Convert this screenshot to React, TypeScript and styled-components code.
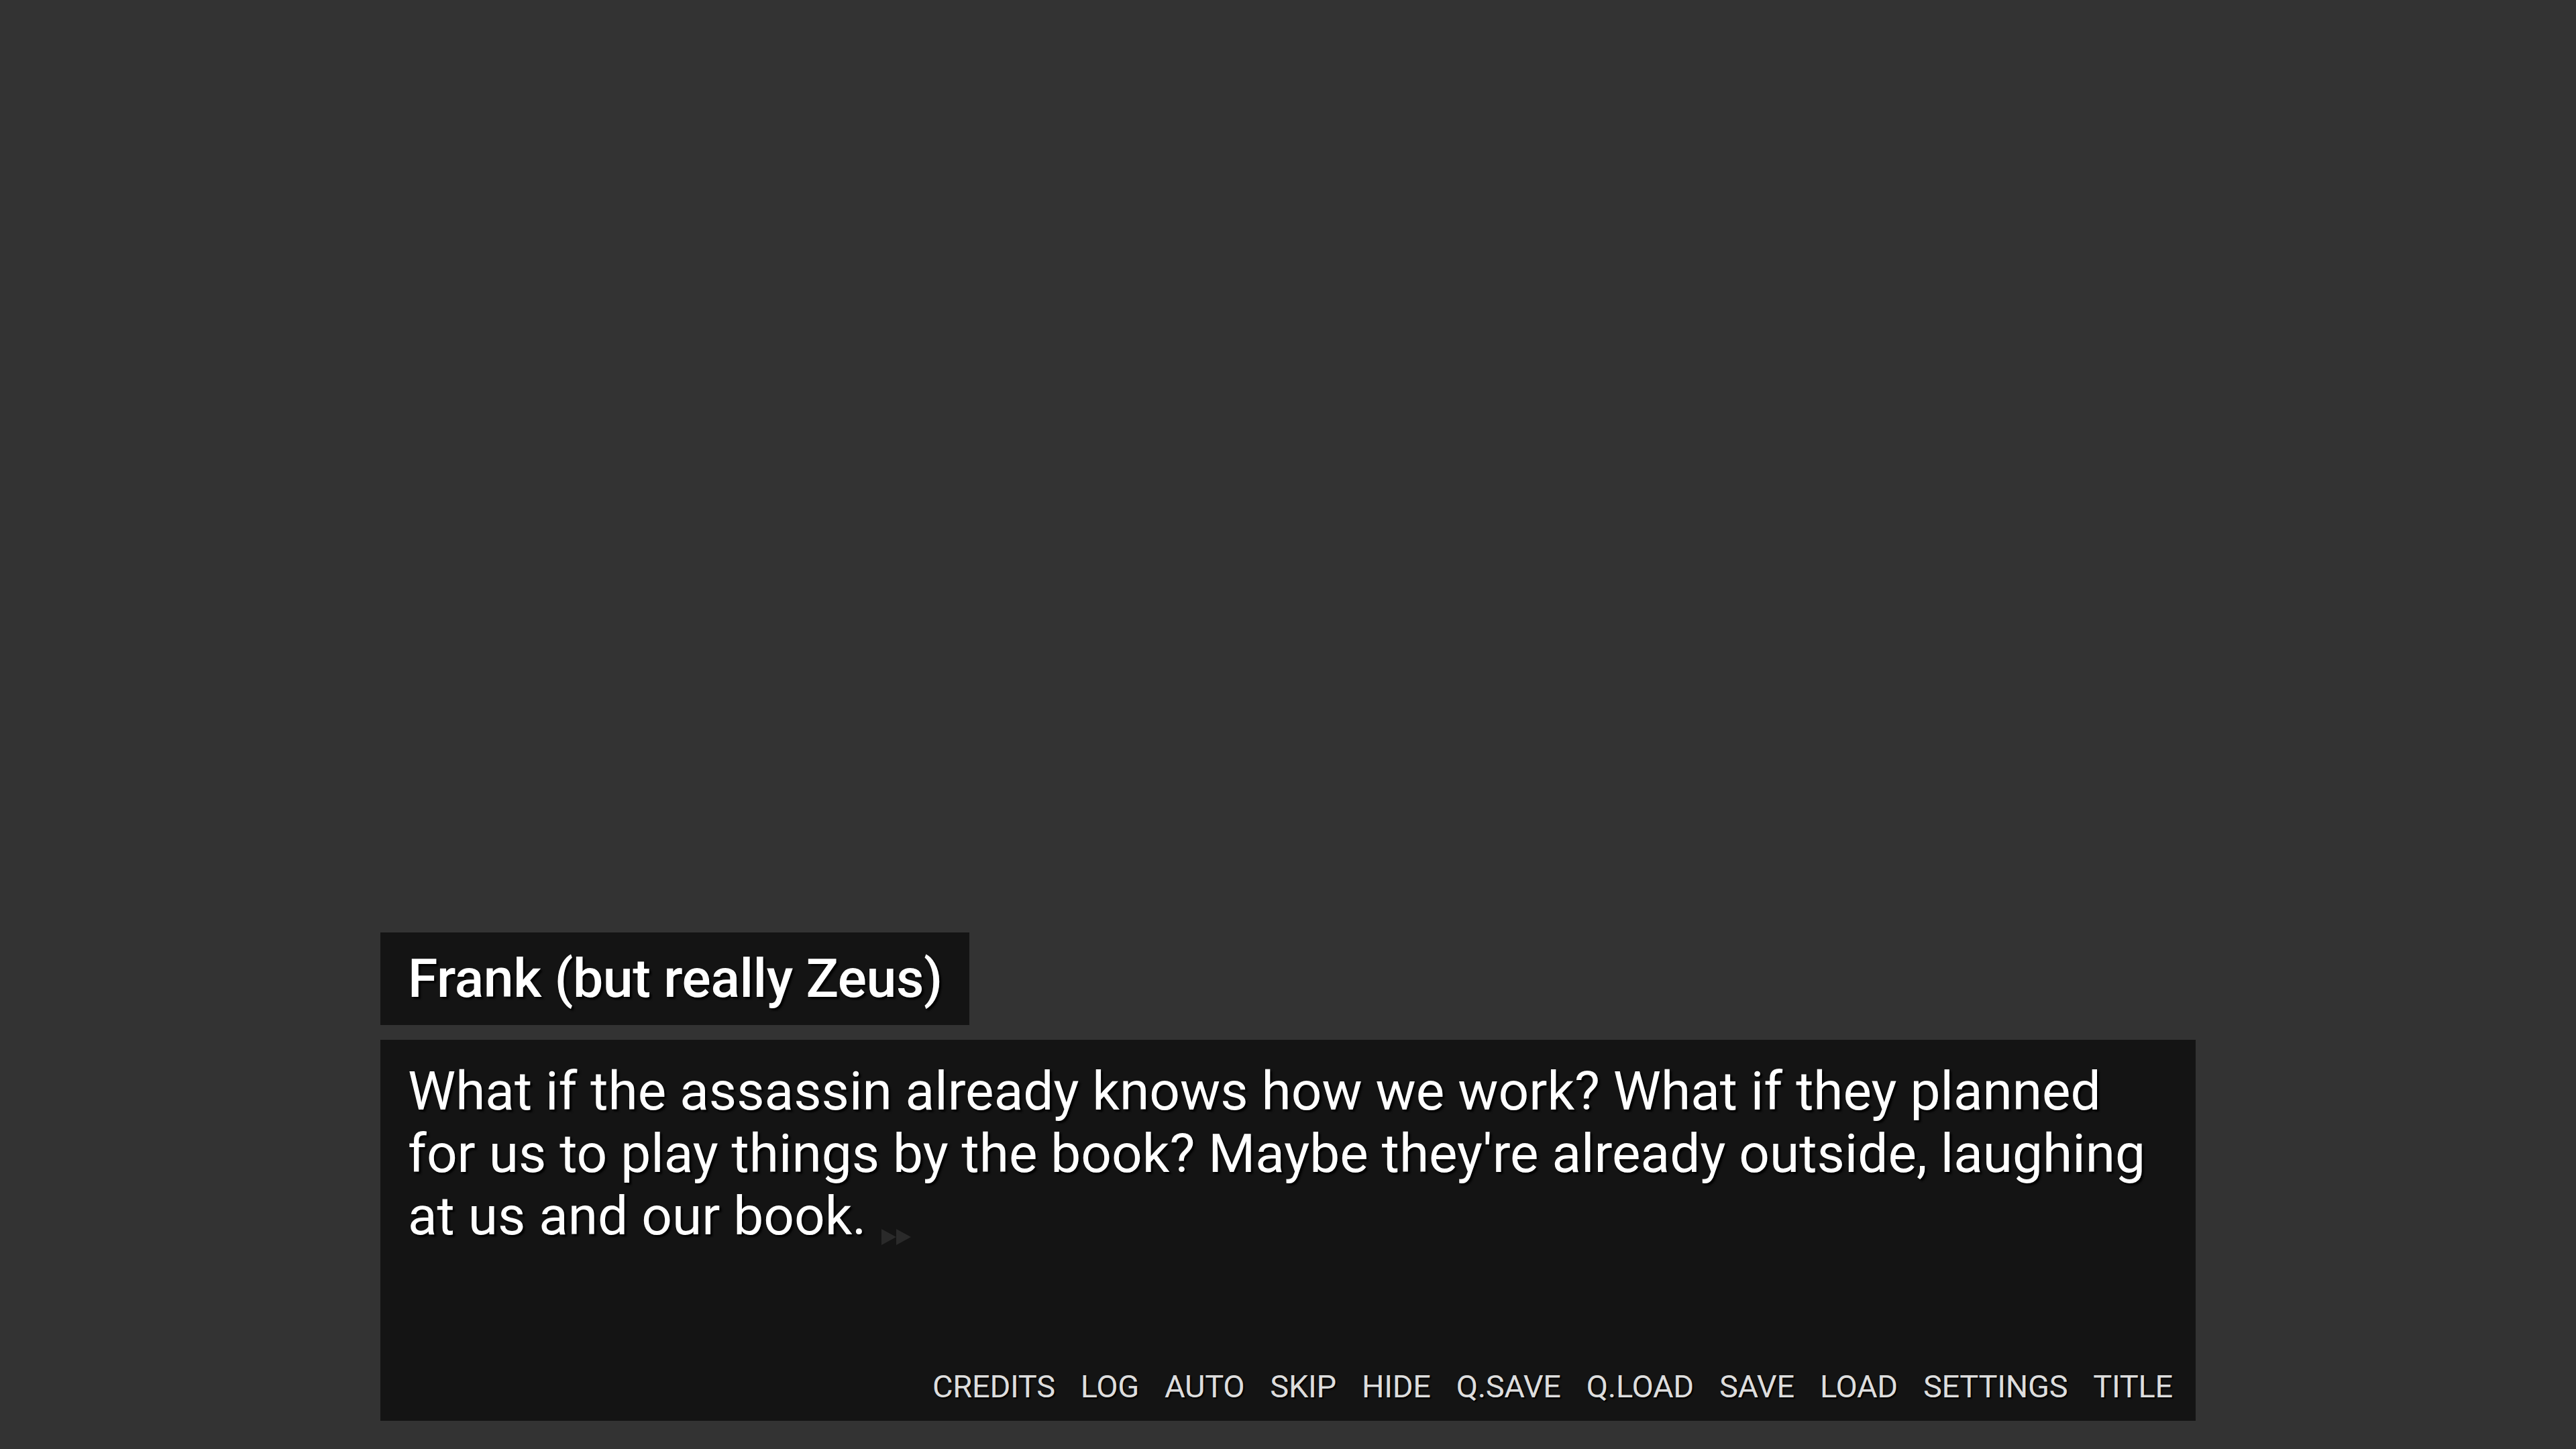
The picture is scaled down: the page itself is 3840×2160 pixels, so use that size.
import React from "react";
import styled, { createGlobalStyle } from "styled-components";

const Global = createGlobalStyle`
  html, body { margin: 0; padding: 0; background: #333333; }
  #root { min-height: 100vh; }
`;

const Stage = styled.div`
  width: 100vw;
  height: 100vh;
  background: #333333;
  display: flex;
  flex-direction: column;
  justify-content: flex-end;
  align-items: center;
  padding-bottom: 42px;
  box-sizing: border-box;
  font-family: Roboto, "Liberation Sans", sans-serif;
`;

const Frame = styled.div`
  width: 2706px;
  display: flex;
  flex-direction: column;
  align-items: flex-start;
  gap: 22px;
`;

const NameBox = styled.div`
  background: #141414;
  height: 138px;
  box-sizing: border-box;
  padding: 0 40px 2px 41px;
  display: flex;
  align-items: center;
  color: #ffffff;
  font-size: 80.6px;
  letter-spacing: -0.4px;
  font-weight: 500;
  text-shadow: 3px 3px 3px #000;
`;

const DialogBox = styled.div`
  align-self: stretch;
  background: #141414;
  height: 568px;
  box-sizing: border-box;
  padding: 31px 34px 21px 41px;
  display: flex;
  flex-direction: column;
  justify-content: space-between;
`;

const Speech = styled.p`
  margin: 0 8px 0 0;
  color: #ffffff;
  font-size: 80.2px;
  line-height: 93px;
  text-shadow: 3px 3px 3px #000;
`;

const Continue = styled.svg`
  display: inline-block;
  width: 44px;
  height: 26px;
  margin-left: 22px;
  vertical-align: -17px;
`;

const Menu = styled.nav`
  display: flex;
  justify-content: flex-end;
  gap: 38px;
`;

const MenuItem = styled.span`
  color: #dddddd;
  font-size: 47px;
  letter-spacing: -0.3px;
  line-height: 60px;
  text-shadow: 2px 2px 2px #000;
`;

const items = ["CREDITS", "LOG", "AUTO", "SKIP", "HIDE", "Q.SAVE", "Q.LOAD", "SAVE", "LOAD", "SETTINGS", "TITLE"];

export default function App() {
  return (
    <>
      <Global />
      <Stage>
        <Frame>
          <NameBox>Frank (but really Zeus)</NameBox>
          <DialogBox>
            <Speech>
              What if the assassin already knows how we work? What if they planned for us to play things by the book? Maybe they're already outside, laughing at us and our book.
              <Continue viewBox="0 0 44 26">
                <polygon points="0,1 22,13 0,25" fill="#2a2a2a" />
                <polygon points="22,1 44,13 22,25" fill="#2a2a2a" />
              </Continue>
            </Speech>
            <Menu>
              {items.map((t) => (
                <MenuItem key={t}>{t}</MenuItem>
              ))}
            </Menu>
          </DialogBox>
        </Frame>
      </Stage>
    </>
  );
}
